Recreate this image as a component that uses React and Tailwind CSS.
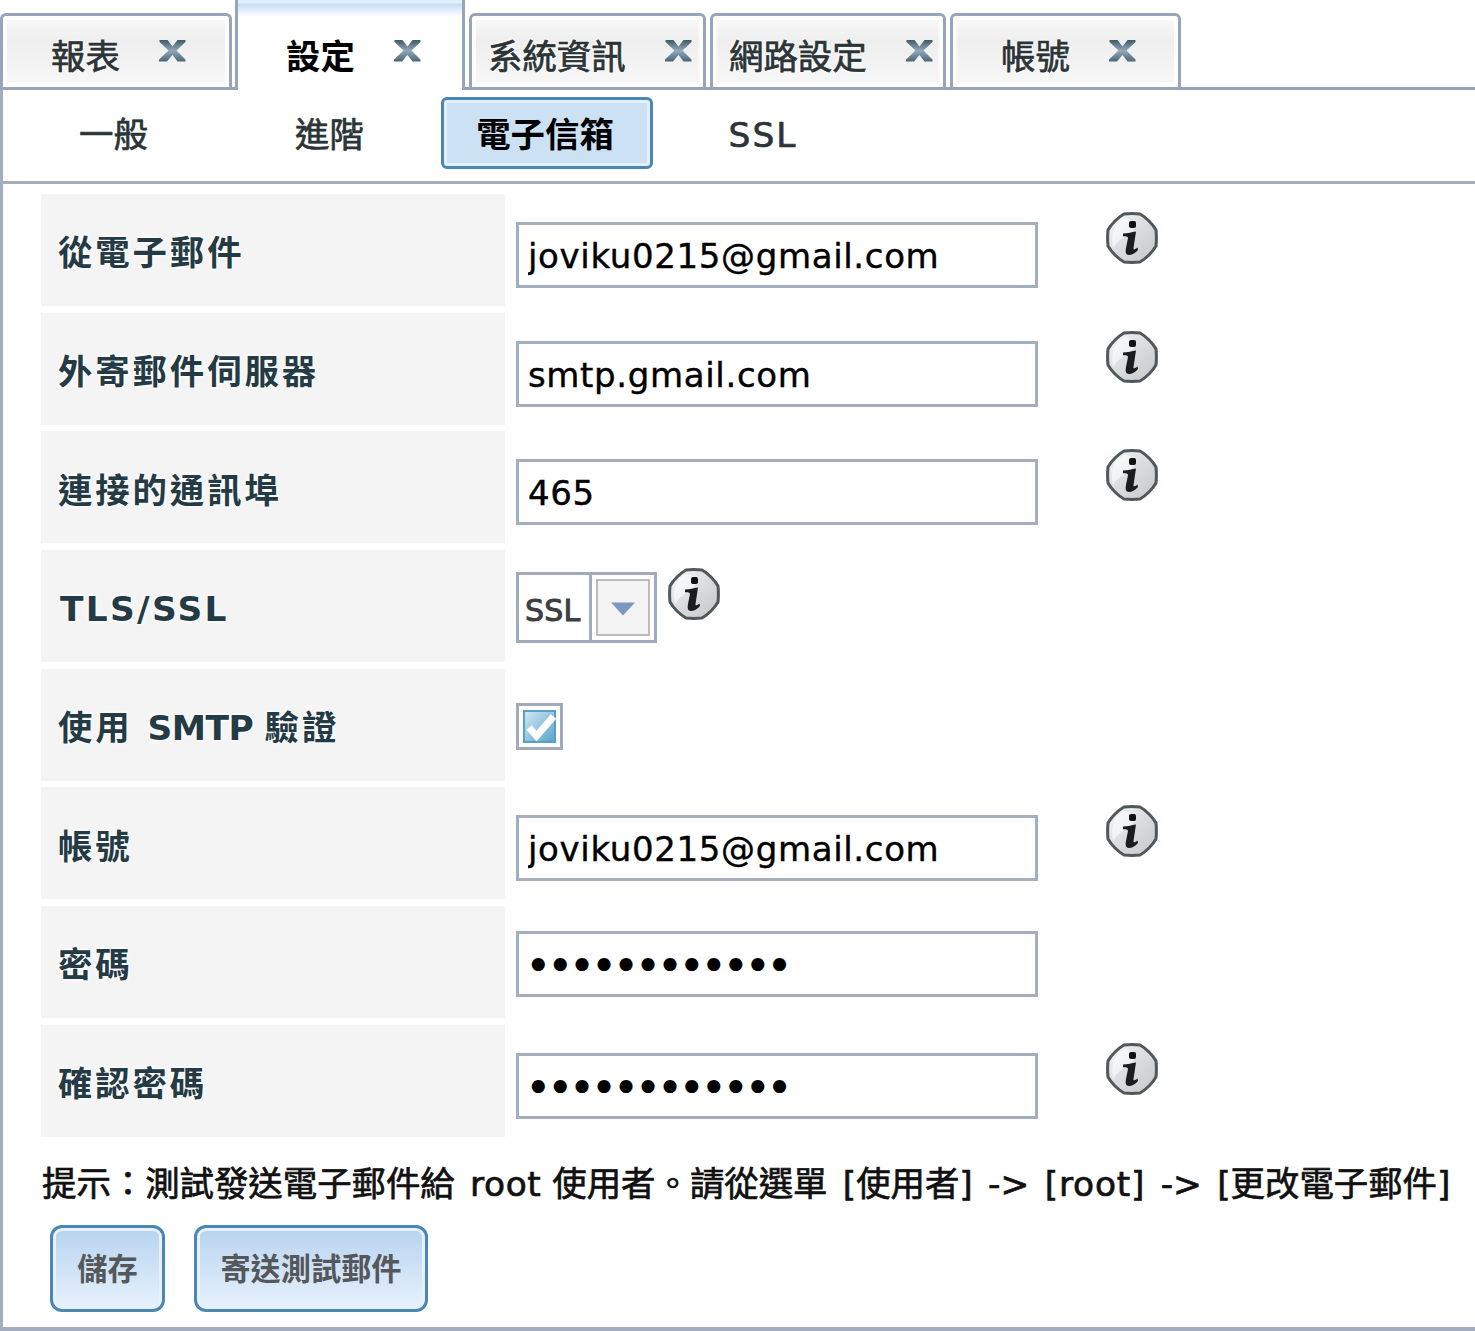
import { useState } from 'react'

const TABS = [
  { id: 'report', label: '報表', tab: 'w-[232px] mr-[3px]', text: 'ml-[48px]' },
  { id: 'settings', label: '設定', tab: 'w-[230px] mr-[4px]', text: 'ml-[48px]' },
  { id: 'system', label: '系統資訊', tab: 'w-[237px] mr-[4px]', text: 'ml-[16px]' },
  { id: 'network', label: '網路設定', tab: 'w-[236px] mr-[4px]', text: 'ml-[16px]' },
  { id: 'account', label: '帳號', tab: 'w-[231px]', text: 'ml-[48px]' },
]

const SUBTABS = [
  { label: '一般', pad: 'pr-[3px]' },
  { label: '進階', pad: 'pr-[3px]' },
  { label: '電子信箱', pad: 'pr-[4px]' },
  { label: 'SSL', pad: 'tracking-[2px]' },
]

const ROWS = [
  { label: '從電子郵件', type: 'text', value: 'joviku0215@gmail.com', info: true },
  { label: '外寄郵件伺服器', type: 'text', value: 'smtp.gmail.com', info: true },
  { label: '連接的通訊埠', type: 'text', value: '465', info: true },
  { label: 'TLS/SSL', type: 'select', value: 'SSL', labelClass: 'ml-[2px] tracking-[2.3px]' },
  {
    label: '使用 SMTP 驗證',
    text: <>使用 <span className="tracking-[-0.5px]">SMTP </span>驗證</>,
    type: 'checkbox',
  },
  { label: '帳號', type: 'text', value: 'joviku0215@gmail.com', info: true },
  { label: '密碼', type: 'password', value: '123456789012', offset: 'mt-[25px]' },
  { label: '確認密碼', type: 'password', value: '123456789012', info: true },
]

const BUTTONS = [
  { label: '儲存', width: 'w-[115px]' },
  { label: '寄送測試郵件', width: 'w-[234px]' },
]

function CloseIcon() {
  return (
    <svg width="28" height="24" viewBox="0 0 28 24" className="block shrink-0">
      <defs>
        <linearGradient id="closeFill" x1="0" y1="0" x2="0" y2="1">
          <stop offset="0" stopColor="#3f5a66" />
          <stop offset="0.5" stopColor="#93a8bb" />
          <stop offset="1" stopColor="#4a6576" />
        </linearGradient>
      </defs>
      <path
        d="M1.5 1H9.5L14.5 7.5L19.5 1H27.5V3L18.5 11.5L27.5 20.5V22.5H19.5L14.5 16L9 22.5H1V20.5L10.5 11.5L1.5 3Z"
        fill="url(#closeFill)"
      />
    </svg>
  )
}

function InfoIcon() {
  return (
    <svg width="52" height="52" viewBox="0 0 52 52" className="block shrink-0">
      <defs>
        <linearGradient id="infoFill" x1="0" y1="0" x2="1" y2="1">
          <stop offset="0" stopColor="#f7f8f8" />
          <stop offset="0.45" stopColor="#dcdfe0" />
          <stop offset="1" stopColor="#c3c7c9" />
        </linearGradient>
      </defs>
      <path
        d="M18 2Q26 1.2 34 2Q38.5 4.5 43 9Q47.5 13.5 50 18Q50.8 26 50 34Q47.5 38.5 43 43Q38.5 47.5 34 50Q26 50.8 18 50Q13.5 47.5 9 43Q4.5 38.5 2 34Q1.2 26 2 18Q4.5 13.5 9 9Q13.5 4.5 18 2Z"
        fill="url(#infoFill)"
        stroke="#50585b"
        strokeWidth="3"
      />
      <path d="M7 36C14 25 22 25 27 18C30 12 27 7 18 6C9 10 4 20 7 36Z" fill="#fff" opacity="0.55" />
      <rect x="23" y="9" width="7" height="7" rx="2" fill="#111" />
      <path
        d="M17 21.5C22 21.5 26 20 30 19.5L27.5 36C27.3 38 29 37.5 31.5 35.5L32 38C29 41.5 26 43 23 43C19.5 43 19.3 40 20 36L22 26C22 24.5 20 24 17 24.3Z"
        fill="#1a1c1d"
      />
    </svg>
  )
}

function Select({ value }) {
  return (
    <div className="mt-[22px] flex h-[71px] w-[141px] border-[3px] border-[#a0acbd] bg-white">
      <span className="flex w-[70px] items-center pl-[6px] pt-[7px] text-[30px] leading-none tracking-[0.2px] text-[#3d4043] [-webkit-text-stroke:1px_#3d4043]">
        {value}
      </span>
      <span className="flex flex-1 border-l-[3px] border-[#a0acbd] p-[4px]">
        <span className="flex flex-1 items-center justify-center border-2 border-[#bcbcbc] bg-[#f3f3f3]">
          <svg width="24" height="14" viewBox="0 0 24 14" className="mt-[2px]">
            <path d="M0 0.5H24L12 13.5Z" fill="#7d96c4" />
          </svg>
        </span>
      </span>
    </div>
  )
}

function Checkbox({ checked, onClick }) {
  return (
    <button onClick={onClick} className="mt-[34px] flex size-[47px] items-center justify-center border-[3px] border-[#a0aab9] bg-white">
      <svg width="35" height="35" viewBox="0 0 35 35" className="shrink-0">
        <defs>
          <linearGradient id="checkFill" x1="0" y1="0" x2="1" y2="1">
            <stop offset="0" stopColor="#d3e9f5" />
            <stop offset="1" stopColor="#58a3cc" />
          </linearGradient>
        </defs>
        <rect x="2" y="2" width="31" height="31" fill="url(#checkFill)" stroke="#5a9fc6" strokeWidth="2" />
        {checked && <path d="M7 18.5L14.5 27L31.5 7.5" fill="none" stroke="#fff" strokeWidth="7" />}
      </svg>
    </button>
  )
}

function Field({ row, checked, onToggle }) {
  if (row.type === 'select') {
    return (
      <>
        <Select value={row.value} />
        <div className="ml-[11px] mt-[18px]"><InfoIcon /></div>
      </>
    )
  }
  if (row.type === 'checkbox') return <Checkbox checked={checked} onClick={onToggle} />

  return (
    <>
      <input
        type={row.type}
        defaultValue={row.value}
        className={`h-[66px] w-[522px] border-[3px] border-[#a3afbf] bg-white text-black outline-none ${row.offset || 'mt-[28px]'} ${
          row.type === 'password'
            ? 'pl-[6px] pt-[3px] text-[45px] tracking-[-4.6px]'
            : 'pl-[9px] pt-[2px] text-[34px] tracking-[0.65px] [-webkit-text-stroke:0.4px_#000]'
        }`}
      />
      {row.info && <div className="ml-[68px] mt-[18px]"><InfoIcon /></div>}
    </>
  )
}

export default function App() {
  const [tab, setTab] = useState('settings')
  const [subtab, setSubtab] = useState('電子信箱')
  const [smtpAuth, setSmtpAuth] = useState(true)

  return (
    <div className="flex h-[1331px] w-[1475px] flex-col overflow-hidden bg-white font-['DejaVu_Sans','Noto_Sans_CJK_TC',sans-serif] text-[34.4px] leading-none text-[#2b3436]">

      {/* Tabs */}
      <div className="flex h-[90px] shrink-0 items-end bg-[linear-gradient(#96a3b6,#96a3b6)] bg-[length:100%_3px] bg-bottom bg-no-repeat">
        {TABS.map(t => {
          const active = tab === t.id
          return (
            <button
              key={t.id}
              onClick={() => setTab(t.id)}
              className={`flex shrink-0 items-start border-[#98a5b8] ${t.tab} ${
                active
                  ? 'h-[90px] border-x-[3px] bg-[linear-gradient(#e2effb_0px,#e2effb_3px,#c5ddf4_4px,#d6e8f8_8px,#ffffff_17px)] pt-[39px] font-bold text-black'
                  : 'h-[77px] rounded-t-[6px] border-[3px] bg-[linear-gradient(#fafafa,#eeeeee_35%,#f8f8f8)] pt-[23px] shadow-[inset_0_0_0_4px_#ffffff] [-webkit-text-stroke:0.7px_#2b3436] [text-shadow:0_0_3px_#fff,0_0_4px_#fff]'
              }`}
            >
              <span className={`whitespace-nowrap pt-px ${t.text}`}>{t.label}</span>
              <span className="ml-[38px]"><CloseIcon /></span>
            </button>
          )
        })}
      </div>

      <div className="flex flex-1 flex-col border-b-[4px] border-l-[3px] border-[#a3adbd]">
        {/* Sub tabs */}
        <div className="flex h-[94px] shrink-0 border-b-[3px] border-[#a3adbd] pl-[6px] pt-[7px]">
          {SUBTABS.map(s => (
            <button
              key={s.label}
              onClick={() => setSubtab(s.label)}
              className={`mr-[4px] flex h-[72px] w-[212px] items-center justify-center rounded-[6px] pt-[4px] ${s.pad} ${
                subtab === s.label
                  ? 'border-[3px] border-[#4a87b4] bg-[#cde1f5] font-bold text-black shadow-[inset_0_0_0_3px_#e3f0fc]'
                  : '[-webkit-text-stroke:0.7px_#2b3436]'
              }`}
            >
              {s.label}
            </button>
          ))}
        </div>

        {/* Form */}
        <div className="flex flex-col gap-[6.7px] pl-[38px] pt-[10px]">
          {ROWS.map(row => (
            <div key={row.label} className="flex h-[112px] items-start">
              <div className="mr-[10.6px] flex h-[112px] w-[464.4px] items-center bg-[#f4f4f4] pl-[17px] pt-[7px] font-bold text-[#243a44] [text-shadow:0_0_3px_#fff,0_0_4px_#fff]">
                <span className={row.labelClass || 'tracking-[2.9px]'}>{row.text || row.label}</span>
              </div>
              <Field row={row} checked={smtpAuth} onToggle={() => setSmtpAuth(!smtpAuth)} />
            </div>
          ))}
        </div>

        <p className="mt-[30px] whitespace-nowrap pl-[39px] text-[#111] [-webkit-text-stroke:0.7px_#111] [word-spacing:4.4px]">
          提示：測試發送電子郵件給 <span className="tracking-[0.6px]">root</span>
          <span className="[word-spacing:0px]"> </span>使用者。請從選單 [使用者] -&gt;{' '}
          <span className="tracking-[0.8px]">[root]</span> -&gt; [更改電子郵件]
        </p>

        <div className="mt-[24px] flex gap-[29px] pl-[47px]">
          {BUTTONS.map(b => (
            <button
              key={b.label}
              className={`flex h-[87px] items-center justify-center whitespace-nowrap rounded-[12px] border-[3px] border-[#4a87b4] bg-linear-to-b from-[#b7d3ef] to-[#e8f2fd] pt-[3px] text-[30.2px] font-bold text-[#55585b] shadow-[inset_0_0_0_3px_#e6f1fc] ${b.width}`}
            >
              {b.label}
            </button>
          ))}
        </div>
      </div>
    </div>
  )
}
